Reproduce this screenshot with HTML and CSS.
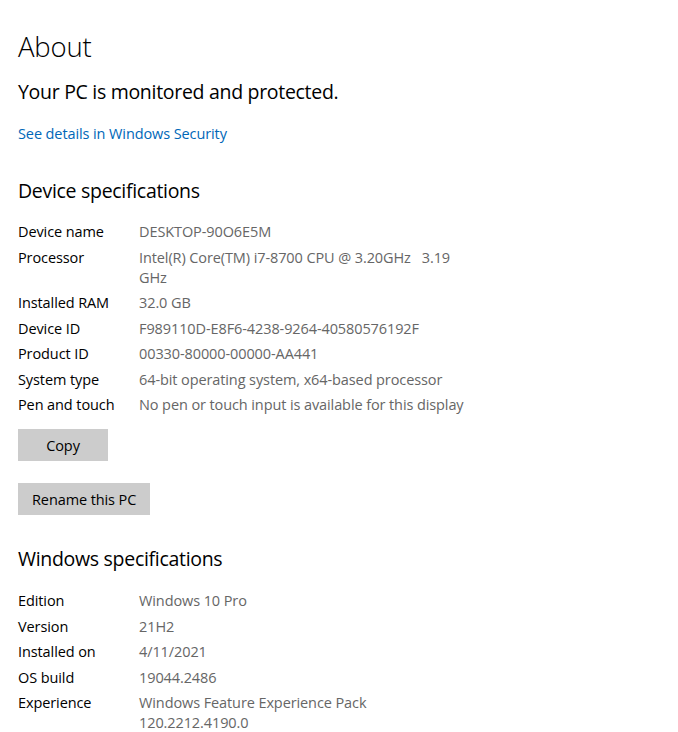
FILE: index.html
```html
<!DOCTYPE html>
<html>
<head>
<meta charset="utf-8">
<link rel="stylesheet" href="styles.css">
</head>
<body>
<main class="page">
  <h1 class="title">About</h1>
  <p class="status">Your PC is monitored and protected.</p>
  <a class="link" href="#">See details in Windows Security</a>

  <h2 class="section">Device specifications</h2>
  <dl class="specs">
    <div class="row"><dt>Device name</dt><dd>DESKTOP-90O6E5M</dd></div>
    <div class="row"><dt>Processor</dt><dd>Intel(R) Core(TM) i7-8700 CPU @ 3.20GHz&nbsp;&nbsp; 3.19 GHz</dd></div>
    <div class="row"><dt>Installed RAM</dt><dd>32.0 GB</dd></div>
    <div class="row"><dt>Device ID</dt><dd>F989110D-E8F6-4238-9264-40580576192F</dd></div>
    <div class="row"><dt>Product ID</dt><dd>00330-80000-00000-AA441</dd></div>
    <div class="row"><dt>System type</dt><dd>64-bit operating system, x64-based processor</dd></div>
    <div class="row"><dt>Pen and touch</dt><dd>No pen or touch input is available for this display</dd></div>
  </dl>
  <div class="buttons">
    <button class="btn">Copy</button>
    <button class="btn">Rename this PC</button>
  </div>

  <h2 class="section section-win">Windows specifications</h2>
  <dl class="specs specs-win">
    <div class="row"><dt>Edition</dt><dd>Windows 10 Pro</dd></div>
    <div class="row"><dt>Version</dt><dd>21H2</dd></div>
    <div class="row"><dt>Installed on</dt><dd>4/11/2021</dd></div>
    <div class="row"><dt>OS build</dt><dd>19044.2486</dd></div>
    <div class="row"><dt>Experience</dt><dd>Windows Feature Experience Pack 120.2212.4190.0</dd></div>
  </dl>
</main>
</body>
</html>
```

FILE: styles.css
```css
html, body {
  margin: 0;
  padding: 0;
  background: #ffffff;
}
body {
  font-family: "Open Sans", "Noto Sans", sans-serif;
  color: #000;
  overflow: hidden;
}
.page {
  padding: 27px 0 0 18px;
  width: 660px;
}
.title {
  margin: 0;
  font-size: 27.5px;
  font-weight: 300;
  line-height: 40px;
  letter-spacing: -0.2px;
}
.status {
  margin: 12px 0 0;
  font-size: 19.5px;
  font-weight: 400;
  line-height: 26px;
  letter-spacing: -0.3px;
}
.link {
  display: block;
  margin-top: 19px;
  font-size: 14.5px;
  line-height: 20px;
  color: #0067b8;
  text-decoration: none;
  letter-spacing: -0.1px;
}
.section {
  margin: 34px 0 0;
  font-size: 19.5px;
  font-weight: 400;
  line-height: 26px;
  letter-spacing: -0.3px;
}
.section-win {
  margin-top: 31px;
}
.specs {
  margin: 18px 0 0;
}
.specs-win {
  margin-top: 19px;
}
.row {
  display: flex;
  margin-bottom: 5.5px;
  font-size: 14.5px;
  line-height: 20px;
  letter-spacing: -0.1px;
}
.row dt {
  width: 121px;
  flex: none;
}
.row dd {
  margin: 0;
  width: 325px;
  color: #666;
}
.buttons {
  display: flex;
  flex-direction: column;
  align-items: flex-start;
  gap: 22px;
  margin-top: 14px;
}
.btn {
  height: 32px;
  padding: 0 14px;
  min-width: 90px;
  border: none;
  background: #cccccc;
  font-family: inherit;
  font-size: 14.5px;
  color: #000;
  letter-spacing: -0.1px;
}
```
